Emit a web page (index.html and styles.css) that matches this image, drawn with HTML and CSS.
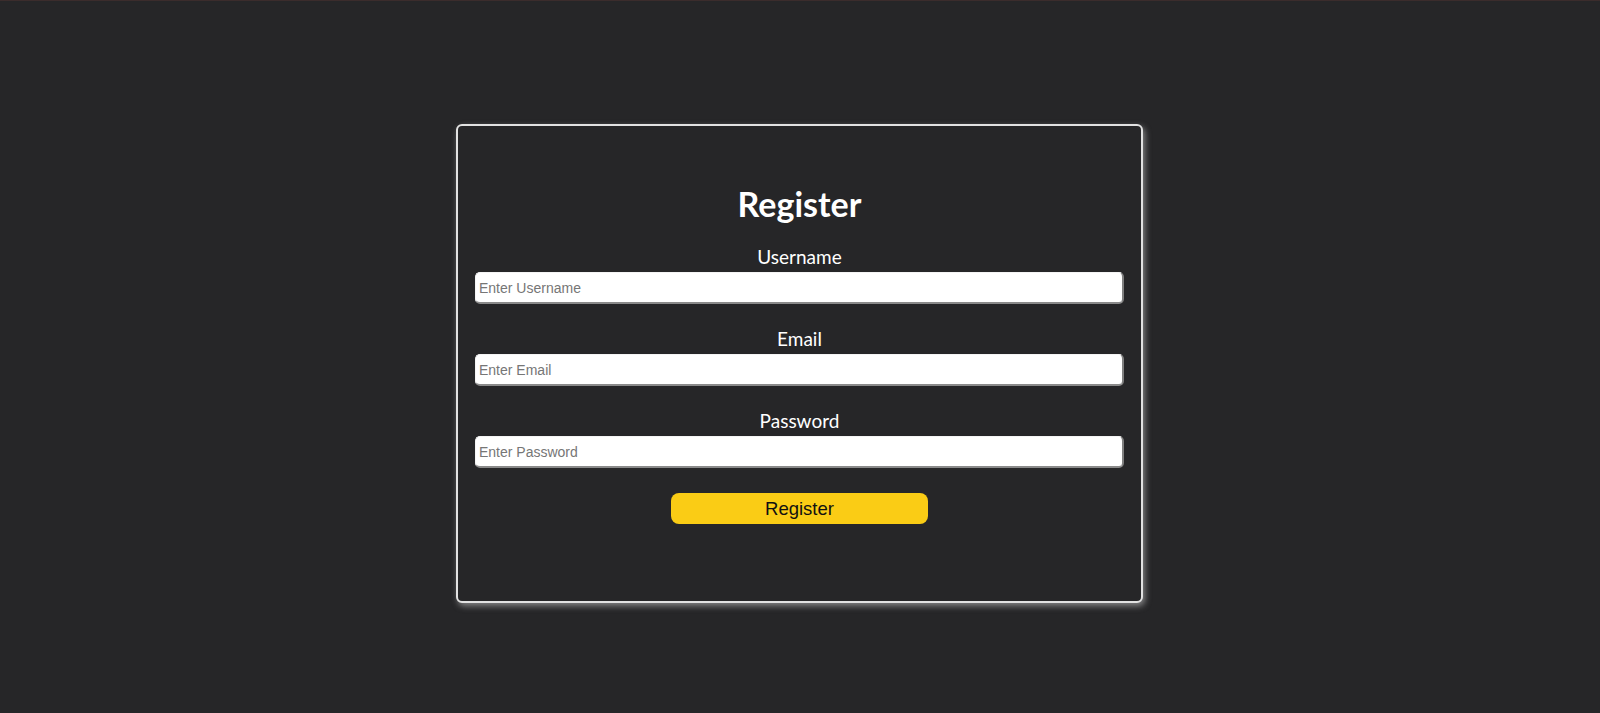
FILE: index.html
```html
<!DOCTYPE html>
<html lang="en">
<head>
<meta charset="utf-8">
<title>Register</title>
<link rel="stylesheet" href="styles.css">
</head>
<body>
<div class="topline"></div>
<main class="page">
  <form class="card">
    <h1 class="title">Register</h1>
    <div class="field">
      <label class="label" for="username">Username</label>
      <input class="input" id="username" type="text" placeholder="Enter Username">
    </div>
    <div class="field">
      <label class="label" for="email">Email</label>
      <input class="input" id="email" type="email" placeholder="Enter Email">
    </div>
    <div class="field">
      <label class="label" for="password">Password</label>
      <input class="input" id="password" type="password" placeholder="Enter Password">
    </div>
    <div class="actions">
      <button class="btn" type="button">Register</button>
    </div>
  </form>
</main>
</body>
</html>
```
FILE: styles.css
```css
html, body {
  margin: 0;
  padding: 0;
}
body {
  background: #262628;
  min-height: 713px;
  font-family: Lato, "Open Sans", sans-serif;
}
.topline {
  height: 1px;
  background: #3b2c2c;
}
.page {
  display: flex;
  justify-content: center;
  padding-top: 123px;
  padding-right: 1px;
}
.card {
  width: 649px;
  padding: 58px 17px 77px 17px;
  border: 2px solid #e2e2e2;
  border-radius: 6px;
  background: #262628;
  box-shadow: 2px 3px 6px rgba(210, 210, 210, 0.55);
  display: flex;
  flex-direction: column;
  gap: 23px;
}
.title {
  margin: 0 0 -2px 0;
  font-family: Lato, sans-serif;
  font-weight: 700;
  font-size: 34px;
  line-height: 40px;
  color: #ffffff;
  text-align: center;
}
.field {
  display: flex;
  flex-direction: column;
}
.label {
  padding-top: 1px;
  font-family: Lato, sans-serif;
  font-size: 19px;
  line-height: 22px;
  color: #ffffff;
  text-align: center;
}
.input {
  margin-top: 4px;
  height: 32px;
  box-sizing: border-box;
  padding: 0 3px;
  border-style: solid;
  border-width: 1px 2px 2px 1px;
  border-color: #f4f4f4 #808080 #8a8a8a #f4f4f4;
  border-radius: 5px;
  background: #ffffff;
  font-family: "Liberation Sans", Arial, sans-serif;
  font-size: 14px;
  color: #222;
}
.input::placeholder {
  color: #767676;
}
.actions {
  display: flex;
  justify-content: center;
  padding-top: 2px;
}
.btn {
  width: 257px;
  height: 31px;
  border: none;
  border-radius: 8px;
  background: #facc15;
  color: #111;
  font-family: "Liberation Sans", Arial, sans-serif;
  font-size: 18.5px;
  cursor: pointer;
}
```
